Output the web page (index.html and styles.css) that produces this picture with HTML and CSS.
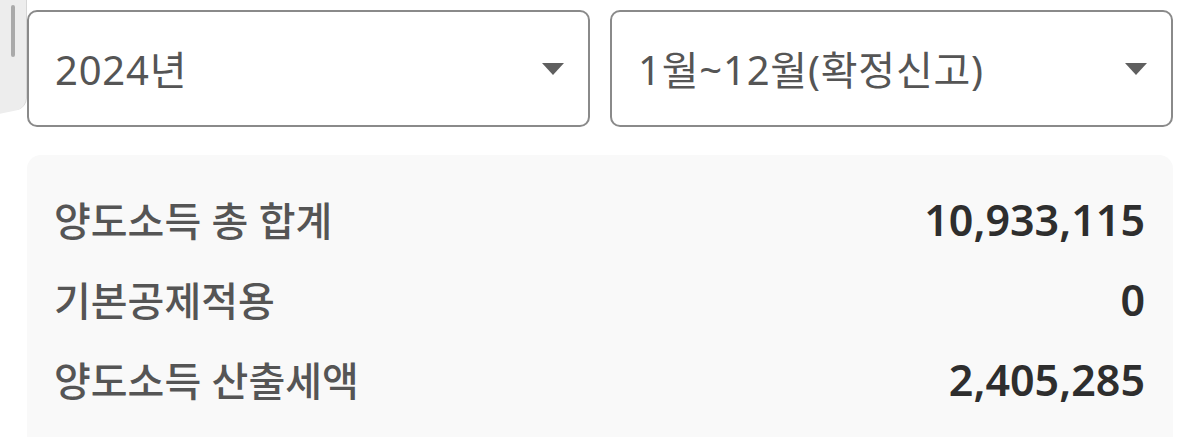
FILE: index.html
```html
<!DOCTYPE html>
<html lang="ko">
<head>
    <meta charset="UTF-8">
    <meta name="viewport" content="width=device-width, initial-scale=1.0">
    <title>양도소득 계산</title>
    <link rel="stylesheet" href="styles.css">
</head>
<body>

    <div class="side-tab"><span class="side-grip"></span></div>

    <div class="main-container">
        <div class="filter-row">
            <div class="select-box">
                <span class="select-text">2024년</span>
                <span class="select-arrow"></span>
            </div>
            <div class="select-box">
                <span class="select-text">1월~12월(확정신고)</span>
                <span class="select-arrow"></span>
            </div>
        </div>

        <div class="summary-card">
            <div class="summary-row">
                <span class="summary-label">양도소득 총 합계</span>
                <span class="summary-value">10,933,115</span>
            </div>
            <div class="summary-row">
                <span class="summary-label">기본공제적용</span>
                <span class="summary-value">0</span>
            </div>
            <div class="summary-row">
                <span class="summary-label">양도소득 산출세액</span>
                <span class="summary-value">2,405,285</span>
            </div>
        </div>
    </div>

</body>
</html>
```

FILE: styles.css
```css
body { font-family: 'Noto Sans', 'Noto Sans CJK KR', sans-serif; background-color: #fff; margin: 0; overflow: hidden; height: 437px; }
.side-tab { position: absolute; top: -10px; left: -20px; width: 46px; height: 118px; background: #ededed; border-right: 1px solid #d6d6d6; border-bottom-right-radius: 10px; transform: skewY(-12deg); transform-origin: top right; z-index: 0; }
.side-grip { position: absolute; left: 31px; top: 12px; width: 4px; height: 52px; background: #aaa; border-radius: 2px; transform: skewY(12deg); }
.main-container { position: relative; z-index: 1; padding: 10px 27px 0 27px; }
.filter-row { display: grid; grid-template-columns: 1fr 1fr; gap: 20px; }
.select-box { display: flex; align-items: center; justify-content: space-between; height: 117px; box-sizing: border-box; border: 2px solid #8a8a8a; border-radius: 10px; background: #fff; padding: 0 24px 2px 26px; }
.select-text { font-size: 40px; color: #555; letter-spacing: 0.8px; }
.select-arrow { width: 0; height: 0; border-left: 11px solid transparent; border-right: 11px solid transparent; border-top: 12px solid #5f5f5f; margin-top: 2px; }
.summary-card { margin-top: 28px; background: #f9f9f9; border-radius: 14px 14px 0 0; padding: 24px 28px 18px 27px; }
.summary-row { display: flex; justify-content: space-between; align-items: center; height: 80px; }
.summary-label { font-size: 40px; font-weight: 500; color: #555; }
.summary-value { font-size: 43px; font-weight: 600; color: #2e2e2e; }
```
